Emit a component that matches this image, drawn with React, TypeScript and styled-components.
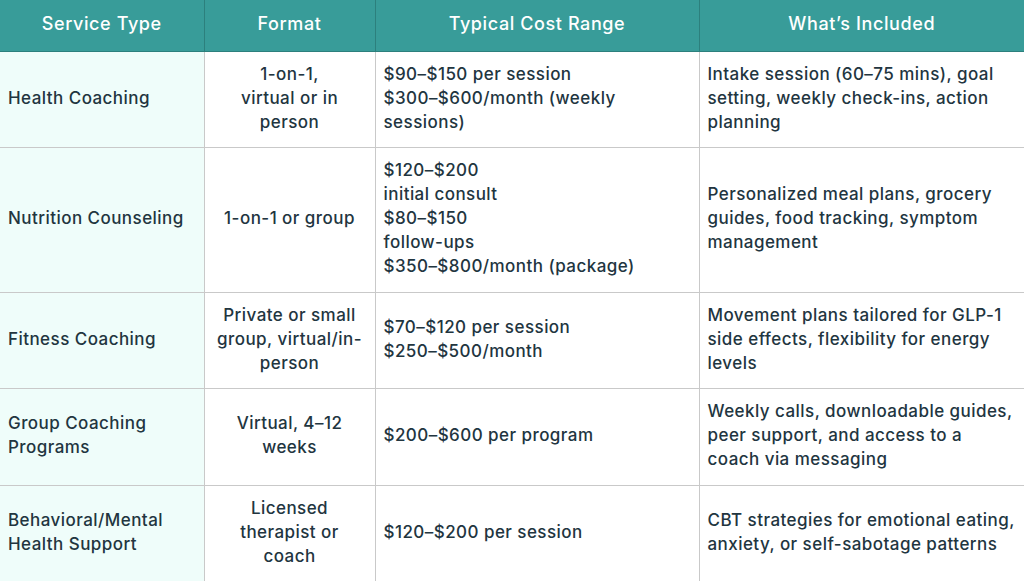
import styled, { createGlobalStyle } from 'styled-components';

const GlobalStyle = createGlobalStyle`
  html, body {
    margin: 0;
    padding: 0;
    background: #ffffff;
  }
  body {
    font-family: Inter, "Noto Sans", sans-serif;
  }
`;

const Table = styled.table`
  width: 1024px;
  border-collapse: collapse;
  table-layout: fixed;
  color: #22353f;
  font-size: 17px;
  font-weight: 500;
  letter-spacing: 0.45px;
  line-height: 24px;
`;

const HeadCell = styled.th`
  background: #389c99;
  color: #ffffff;
  font-size: 18px;
  font-weight: 500;
  letter-spacing: 0.6px;
  height: 51px;
  padding: 0 8px 2px;
  text-align: center;
  border: 1px solid #2c807d;
  border-top: none;
  box-sizing: border-box;
  &:first-child { border-left: none; }
  &:last-child { border-right: none; }
`;

const Cell = styled.td<{ $first?: boolean; $center?: boolean }>`
  background: ${p => (p.$first ? '#effdfa' : '#ffffff')};
  text-align: ${p => (p.$center ? 'center' : 'left')};
  vertical-align: middle;
  white-space: nowrap;
  padding: 10px 8px 13.5px;
  border: 1px solid #c9c9c9;
  &:first-child { border-left: none; }
  &:last-child { border-right: none; }
`;

const rows: { service: string[]; format: string[]; cost: string[]; included: string[] }[] = [
  {
    service: ['Health Coaching'],
    format: ['1-on-1,', 'virtual or in', 'person'],
    cost: ['$90–$150 per session', '$300–$600/month (weekly', 'sessions)'],
    included: ['Intake session (60–75 mins), goal', 'setting, weekly check-ins, action', 'planning'],
  },
  {
    service: ['Nutrition Counseling'],
    format: ['1-on-1 or group'],
    cost: ['$120–$200', 'initial consult', '$80–$150', 'follow-ups', '$350–$800/month (package)'],
    included: ['Personalized meal plans, grocery', 'guides, food tracking, symptom', 'management'],
  },
  {
    service: ['Fitness Coaching'],
    format: ['Private or small', 'group, virtual/in-', 'person'],
    cost: ['$70–$120 per session', '$250–$500/month'],
    included: ['Movement plans tailored for GLP-1', 'side effects, flexibility for energy', 'levels'],
  },
  {
    service: ['Group Coaching', 'Programs'],
    format: ['Virtual, 4–12', 'weeks'],
    cost: ['$200–$600 per program'],
    included: ['Weekly calls, downloadable guides,', 'peer support, and access to a', 'coach via messaging'],
  },
  {
    service: ['Behavioral/Mental', 'Health Support'],
    format: ['Licensed', 'therapist or', 'coach'],
    cost: ['$120–$200 per session'],
    included: ['CBT strategies for emotional eating,', 'anxiety, or self-sabotage patterns'],
  },
];

const Lines = ({ lines }: { lines: string[] }) => (
  <>
    {lines.map((l, i) => (
      <span key={i}>
        {l}
        {i < lines.length - 1 && <br />}
      </span>
    ))}
  </>
);

const App = () => {
  return (
    <>
      <GlobalStyle />
      <Table>
        <colgroup>
          <col style={{ width: 204 }} />
          <col style={{ width: 171 }} />
          <col style={{ width: 324 }} />
          <col style={{ width: 325 }} />
        </colgroup>
        <thead>
          <tr>
            <HeadCell>Service Type</HeadCell>
            <HeadCell>Format</HeadCell>
            <HeadCell>Typical Cost Range</HeadCell>
            <HeadCell>What’s Included</HeadCell>
          </tr>
        </thead>
        <tbody>
          {rows.map((r, i) => (
            <tr key={i}>
              <Cell $first><Lines lines={r.service} /></Cell>
              <Cell $center><Lines lines={r.format} /></Cell>
              <Cell><Lines lines={r.cost} /></Cell>
              <Cell><Lines lines={r.included} /></Cell>
            </tr>
          ))}
        </tbody>
      </Table>
    </>
  );
};

export default App;
